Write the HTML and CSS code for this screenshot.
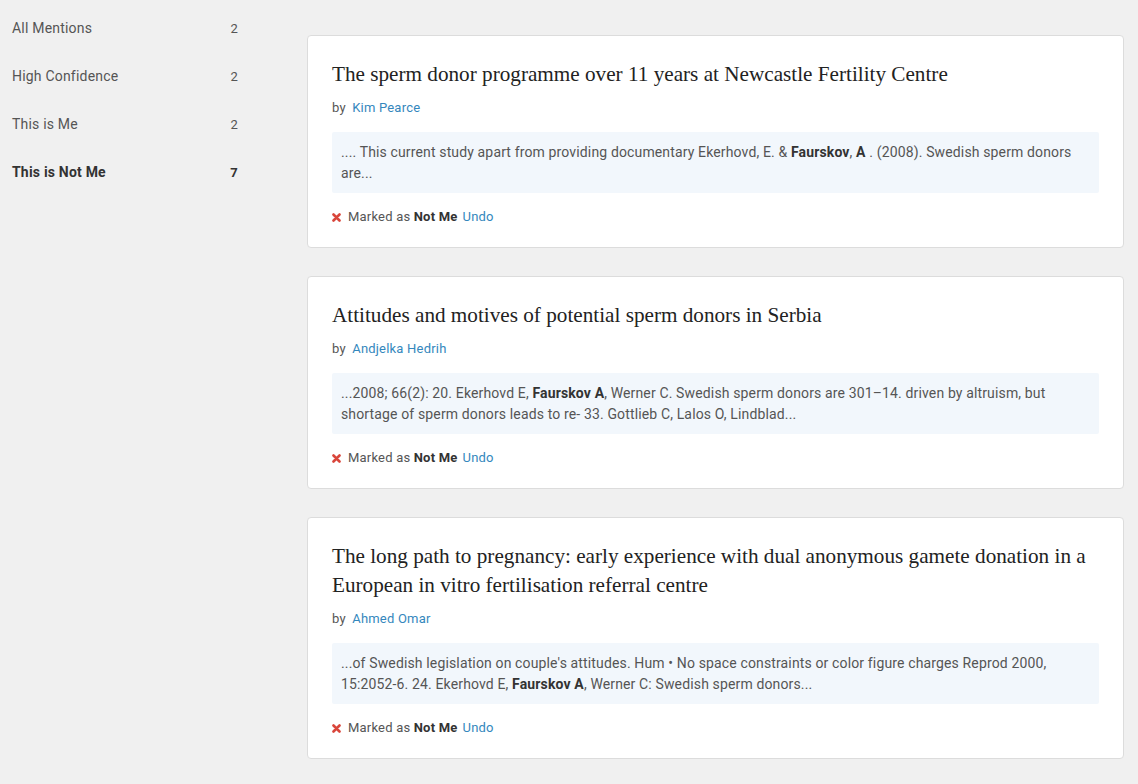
FILE: index.html
```html
<!DOCTYPE html>
<html lang="en">
<head>
    <meta charset="UTF-8">
    <meta name="viewport" content="width=device-width, initial-scale=1.0">
    <title>Mentions</title>
    <link rel="stylesheet" href="styles.css">
</head>
<body>
    <div class="page">
        <aside class="sidebar">
            <a class="filter" href="#"><span>All Mentions</span><span class="count">2</span></a>
            <a class="filter" href="#"><span>High Confidence</span><span class="count">2</span></a>
            <a class="filter" href="#"><span>This is Me</span><span class="count">2</span></a>
            <a class="filter active" href="#"><span>This is Not Me</span><span class="count">7</span></a>
        </aside>

        <main class="mentions">
            <div class="card">
                <h2 class="title">The sperm donor programme over 11 years at Newcastle Fertility Centre</h2>
                <div class="byline">by <a href="#">Kim Pearce</a></div>
                <div class="snippet">.... This current study apart from providing documentary Ekerhovd, E. &amp; <b>Faurskov</b>, <b>A</b> . (2008). Swedish sperm donors are...</div>
                <div class="status">
                    <svg class="cross" width="9" height="9" viewBox="0 0 9 9"><path d="M1.5 1.5 L7.5 7.5 M7.5 1.5 L1.5 7.5"/></svg>
                    <span>Marked as <b>Not Me</b></span> <a href="#">Undo</a>
                </div>
            </div>

            <div class="card">
                <h2 class="title">Attitudes and motives of potential sperm donors in Serbia</h2>
                <div class="byline">by <a href="#">Andjelka Hedrih</a></div>
                <div class="snippet">...2008; 66(2): 20. Ekerhovd E, <b>Faurskov A</b>, Werner C. Swedish sperm donors are 301–14. driven by altruism, but shortage of sperm donors leads to re- 33. Gottlieb C, Lalos O, Lindblad...</div>
                <div class="status">
                    <svg class="cross" width="9" height="9" viewBox="0 0 9 9"><path d="M1.5 1.5 L7.5 7.5 M7.5 1.5 L1.5 7.5"/></svg>
                    <span>Marked as <b>Not Me</b></span> <a href="#">Undo</a>
                </div>
            </div>

            <div class="card">
                <h2 class="title">The long path to pregnancy: early experience with dual anonymous gamete donation in a European in vitro fertilisation referral centre</h2>
                <div class="byline">by <a href="#">Ahmed Omar</a></div>
                <div class="snippet">...of Swedish legislation on couple's attitudes. Hum • No space constraints or color figure charges Reprod 2000, 15:2052-6. 24. Ekerhovd E, <b>Faurskov A</b>, Werner C: Swedish sperm donors...</div>
                <div class="status">
                    <svg class="cross" width="9" height="9" viewBox="0 0 9 9"><path d="M1.5 1.5 L7.5 7.5 M7.5 1.5 L1.5 7.5"/></svg>
                    <span>Marked as <b>Not Me</b></span> <a href="#">Undo</a>
                </div>
            </div>
        </main>
    </div>
</body>
</html>
```

FILE: styles.css
```css
* {
    margin: 0;
    padding: 0;
    box-sizing: border-box;
}

body {
    background-color: #f0f0f0;
    font-family: Roboto, "Liberation Sans", sans-serif;
    letter-spacing: 0.2px;
    color: #555;
}

a {
    text-decoration: none;
}

.page {
    display: grid;
    grid-template-columns: 250px 1fr;
    column-gap: 57px;
    padding-right: 14px;
}

/* left filter list */
.sidebar {
    padding-top: 4px;
}

.filter {
    display: flex;
    justify-content: space-between;
    align-items: center;
    height: 48px;
    padding: 0 12px;
    font-size: 14px;
    color: #555;
}

.filter.active {
    font-weight: bold;
    color: #333;
}

.count {
    font-size: 13px;
}

/* cards */
.mentions {
    padding-top: 35px;
    display: flex;
    flex-direction: column;
    gap: 28px;
}

.card {
    background-color: #fff;
    border: 1px solid #dcdcdc;
    border-radius: 4px;
    padding: 24px 24px 20px;
}

.title {
    font-family: "Liberation Serif", serif;
    font-weight: normal;
    font-size: 21.2px;
    letter-spacing: 0;
    line-height: 29px;
    color: #222;
}

.byline {
    margin-top: 9px;
    font-size: 13px;
    line-height: 20px;
    color: #555;
}

.byline a {
    margin-left: 3px;
    color: #3487bd;
}

.snippet {
    margin-top: 14px;
    padding: 10px 9px 9px;
    background-color: #f2f7fc;
    border-radius: 2px;
    font-size: 14px;
    letter-spacing: 0.14px;
    line-height: 21px;
    color: #555;
}

.snippet b {
    color: #333;
}

.status {
    margin-top: 14px;
    font-size: 13px;
    line-height: 20px;
    color: #555;
    display: flex;
    align-items: center;
    gap: 6px;
}

.status span {
    margin-left: 1px;
}

.status b {
    color: #333;
}

.status a {
    margin-left: -1px;
    color: #3487bd;
}

.cross path {
    stroke: #d9463b;
    stroke-width: 2.6;
    stroke-linecap: round;
}
```
